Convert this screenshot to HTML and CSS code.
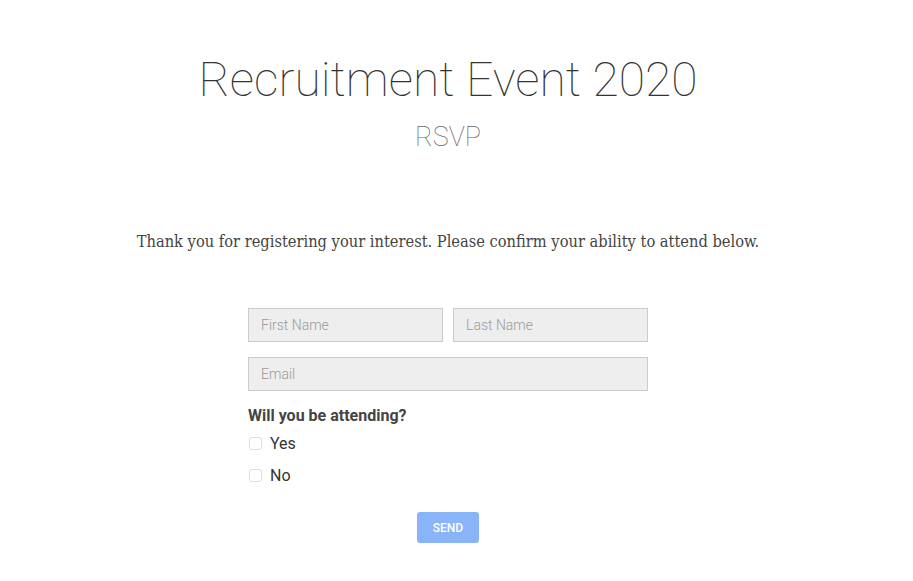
FILE: index.html
```html
<!DOCTYPE html>
<html lang="en">
<head>
  <meta charset="UTF-8" />
  <meta name="viewport" content="width=device-width, initial-scale=1.0" />
  <title>Recruitment Event 2020 | RSVP</title>
  <link rel="stylesheet" href="styles.css">
</head>
<body>
  <div class="page">
    <header>
      <h1>Recruitment Event 2020</h1>
      <h2>RSVP</h2>
    </header>
    <main>
      <p class="intro">Thank you for registering your interest. Please confirm your ability to attend below.</p>
      <form class="rsvp">
        <div class="row">
          <input type="text" placeholder="First Name" />
          <input type="text" placeholder="Last Name" />
        </div>
        <div class="row">
          <input type="email" placeholder="Email" />
        </div>
        <fieldset>
          <legend>Will you be attending?</legend>
          <label class="choice"><input type="checkbox" /><span>Yes</span></label>
          <label class="choice"><input type="checkbox" /><span>No</span></label>
        </fieldset>
        <div class="actions">
          <button type="button">Send</button>
        </div>
      </form>
    </main>
  </div>
</body>
</html>
```

FILE: styles.css
```css
html, body {
  margin: 0;
  padding: 0;
  background: #ffffff;
  color: #333333;
  font-family: Roboto, "Liberation Sans", sans-serif;
}

.page {
  margin-right: 17px;
}

header {
  text-align: center;
  padding-top: 50px;
}

header h1 {
  margin: 0;
  font-size: 48px;
  font-weight: 100;
  line-height: 60px;
  color: #333333;
}

header h2 {
  margin: 0;
  padding-top: 9px;
  font-size: 27px;
  font-weight: 100;
  line-height: 36px;
  color: #666666;
}

main {
  padding-top: 75px;
}

.intro {
  margin: 0;
  text-align: center;
  font-family: "DejaVu Serif Condensed", "DejaVu Serif", serif;
  font-weight: 300;
  font-size: 16.3px;
  line-height: 24px;
  color: #444444;
}

.rsvp {
  width: 400px;
  margin: 54px auto 0;
}

.row {
  display: flex;
  gap: 10px;
  margin-bottom: 15px;
}

.row input {
  flex: 1;
  min-width: 0;
  height: 34px;
  box-sizing: border-box;
  padding: 0 12px;
  background: #eeeeee;
  border: 1px solid #cccccc;
  border-radius: 0;
  font-family: Roboto, sans-serif;
  font-weight: 300;
  font-size: 14px;
  color: #333333;
}

.row input::placeholder {
  color: #9a9a9a;
}

fieldset {
  border: none;
  margin: 0;
  padding: 0;
}

legend {
  padding: 0;
  font-size: 16px;
  font-weight: 700;
  color: #444444;
  line-height: 20px;
  margin-top: 1px;
  margin-bottom: 1px;
}

.choice {
  display: flex;
  align-items: center;
  gap: 8px;
  height: 32px;
  font-size: 16px;
  color: #333333;
}

.choice input {
  appearance: none;
  margin: 0 0 0 1px;
  width: 13px;
  height: 13px;
  border: 1px solid #dddddd;
  border-radius: 3px;
  background: #ffffff;
}

.actions {
  display: flex;
  justify-content: center;
  margin-top: 21px;
}

.actions button {
  width: 62px;
  height: 31px;
  border: none;
  border-radius: 3px;
  background: #8ab4f8;
  color: #ffffff;
  font-family: Roboto, sans-serif;
  font-weight: 500;
  font-size: 12px;
  text-transform: uppercase;
}
```
